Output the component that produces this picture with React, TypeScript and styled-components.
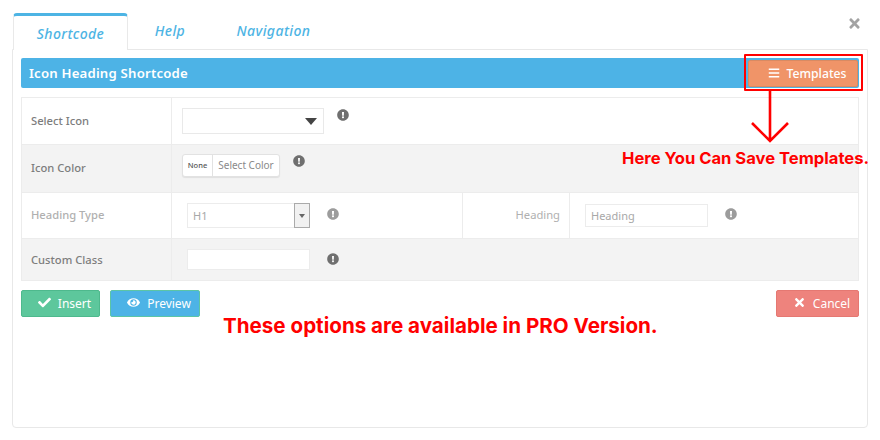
import React from 'react';
import styled, { createGlobalStyle } from 'styled-components';
import { FaBars, FaCheck, FaExclamationCircle, FaEye, FaTimes } from 'react-icons/fa';

const GlobalStyle = createGlobalStyle`
  html, body {
    margin: 0;
    padding: 0;
    background: #fff;
    font-family: 'Noto Sans', 'Open Sans', sans-serif;
  }
`;

export default function App() {
  return (
    <>
      <GlobalStyle />
      <Page>
        <TabBar>
          <ActiveTab>Shortcode</ActiveTab>
          <Tab $width={84}>Help</Tab>
          <Tab $width={123}>Navigation</Tab>
          <Close>
            <FaTimes />
          </Close>
        </TabBar>
        <Panel>
          <TitleBar>
            <Title>Icon Heading Shortcode</Title>
            <TemplatesButton>
              <FaBars />
              Templates
            </TemplatesButton>
          </TitleBar>
          <Table>
            <Row $height={47}>
              <LabelCell>Select Icon</LabelCell>
              <FieldCell>
                <Select>
                  <Caret />
                </Select>
                <Info $top={-6} $gap={13}>
                  <FaExclamationCircle />
                </Info>
              </FieldCell>
            </Row>
            <Row $height={48} $shaded>
              <LabelCell>Icon Color</LabelCell>
              <FieldCell>
                <ColorPicker>
                  <NoneSwatch>None</NoneSwatch>
                  <ColorText>Select Color</ColorText>
                </ColorPicker>
                <Info $top={-8} $gap={13}>
                  <FaExclamationCircle />
                </Info>
              </FieldCell>
            </Row>
            <Row $height={46} $muted>
              <LabelCell>Heading Type</LabelCell>
              <TypeCell>
                <TextField $width={123} $height={25}>
                  H1
                  <SpinButton />
                </TextField>
                <Info $muted $gap={17}>
                  <FaExclamationCircle />
                </Info>
              </TypeCell>
              <HeadingLabel>Heading</HeadingLabel>
              <HeadingCell>
                <TextField $width={123} $height={23}>
                  Heading
                </TextField>
                <Info $muted $gap={17}>
                  <FaExclamationCircle />
                </Info>
              </HeadingCell>
            </Row>
            <Row $height={41} $shaded>
              <LabelCell>Custom Class</LabelCell>
              <TypeCell>
                <TextField $width={123} $height={21} />
                <Info $top={-1} $gap={17}>
                  <FaExclamationCircle />
                </Info>
              </TypeCell>
            </Row>
          </Table>
          <Actions>
            <ActionButton $bg="#5dc79c" $border="#4eb98d" $width={79}>
              <FaCheck />
              Insert
            </ActionButton>
            <ActionButton $bg="#4db3e6" $border="#5cc5a5" $width={90}>
              <FaEye />
              Preview
            </ActionButton>
            <Spacer />
            <ActionButton $bg="#ee837d" $border="#e57872" $width={83}>
              <FaTimes />
              Cancel
            </ActionButton>
          </Actions>
        </Panel>

        <RedBox />
        <RedArrow width="40" height="54" viewBox="0 0 40 54">
          <path d="M20 0V50M2 32L20 50L38 32" fill="none" stroke="#f00" strokeWidth="2.6" />
        </RedArrow>
        <SaveNote>Here You Can Save Templates.</SaveNote>
        <ProNote>These options are available in PRO Version.</ProNote>
      </Page>
    </>
  );
}

const Page = styled.div`
  position: relative;
  width: 880px;
  height: 440px;
  padding: 13px 12px 0;
  box-sizing: border-box;
  overflow: hidden;
`;

const TabBar = styled.div`
  display: flex;
  height: 37px;
  padding-left: 1px;
  position: relative;
`;

const ActiveTab = styled.div`
  width: 115px;
  height: 37px;
  box-sizing: border-box;
  border: 1px solid #e9e9e9;
  border-top: 3px solid #4db4e4;
  border-bottom: 0;
  border-radius: 4px 4px 0 0;
  background: #fff;
  color: #4db4e4;
  font-size: 14px;
  font-style: italic;
  font-weight: 500;
  letter-spacing: 0.4px;
  line-height: 36px;
  text-align: center;
  position: relative;
  z-index: 1;
`;

const Tab = styled.div<{ $width: number }>`
  width: ${(p) => p.$width}px;
  color: #4db4e4;
  font-size: 14px;
  font-style: italic;
  font-weight: 500;
  letter-spacing: 0.4px;
  line-height: 36px;
  text-align: center;
`;

const Close = styled.div`
  position: absolute;
  right: 6px;
  top: 3px;
  color: #a3a3a3;
  font-size: 15px;
  line-height: 15px;
`;

const Panel = styled.div`
  width: 856px;
  height: 379px;
  box-sizing: border-box;
  margin-top: -1px;
  padding: 8px 8px 0;
  border: 1px solid #e8e8e8;
  border-radius: 0 0 4px 4px;
`;

const TitleBar = styled.div`
  display: flex;
  align-items: center;
  justify-content: space-between;
  height: 30px;
  background: #4db3e6;
  border-radius: 2px;
  padding: 0 1px 0 8px;
`;

const Title = styled.div`
  color: #fff;
  font-size: 13.2px;
  font-weight: 600;
  letter-spacing: 0.2px;
`;

const TemplatesButton = styled.div`
  display: flex;
  align-items: center;
  justify-content: center;
  gap: 7px;
  width: 110px;
  height: 27px;
  box-sizing: border-box;
  padding-left: 8px;
  background: #f09468;
  border: 1px solid #d98a62;
  border-radius: 2px;
  color: #fff;
  font-size: 12.2px;
  font-weight: 500;

  svg {
    font-size: 12px;
  }
`;

const Table = styled.div`
  margin-top: 9px;
  border: 1px solid #ececec;
`;

const Row = styled.div<{ $height: number; $shaded?: boolean; $muted?: boolean }>`
  display: flex;
  height: ${(p) => p.$height}px;
  box-sizing: border-box;
  background: ${(p) => (p.$shaded ? '#f3f3f3' : '#fff')};
  color: ${(p) => (p.$muted ? '#b0b0b0' : '#7d7d7d')};
  border-bottom: 1px solid #ececec;

  &:last-child {
    border-bottom: 0;
  }
`;

const LabelCell = styled.div`
  display: flex;
  align-items: center;
  width: 150px;
  box-sizing: border-box;
  padding: 0 0 2px 9px;
  margin-right: -1px;
  border-right: 1px solid #ececec;
  font-size: 11.2px;
  font-weight: 500;

  ${Row}:last-child & {
    padding-bottom: 0;
  }
`;

const FieldCell = styled.div`
  display: flex;
  align-items: center;
  flex: 1;
  padding-left: 11px;
`;

const TypeCell = styled.div`
  display: flex;
  align-items: center;
  width: 291px;
  box-sizing: border-box;
  padding-left: 16px;
`;

const HeadingLabel = styled.div`
  display: flex;
  align-items: center;
  justify-content: flex-end;
  width: 108px;
  box-sizing: border-box;
  padding: 0 9px 2px 0;
  border-left: 1px solid #ececec;
  border-right: 1px solid #ececec;
  font-size: 11.2px;
`;

const HeadingCell = styled.div`
  display: flex;
  align-items: center;
  flex: 1;
  padding-left: 15px;
`;

const Select = styled.div`
  display: flex;
  align-items: center;
  justify-content: flex-end;
  width: 142px;
  height: 26px;
  box-sizing: border-box;
  padding-right: 6px;
  border: 1px solid #e9e9e9;
  background: #fff;
`;

const Caret = styled.span`
  width: 0;
  height: 0;
  border-left: 6px solid transparent;
  border-right: 6px solid transparent;
  border-top: 7px solid #444;
`;

const Info = styled.span<{ $top?: number; $muted?: boolean; $gap: number }>`
  display: inline-flex;
  margin-left: ${(p) => p.$gap}px;
  color: ${(p) => (p.$muted ? '#9c9c9c' : '#6f6f6f')};
  font-size: 12px;
  transform: translateY(${(p) => p.$top ?? -2}px);
`;

const ColorPicker = styled.div`
  display: flex;
  height: 23px;
  box-sizing: border-box;
  border: 1px solid #e2e2e2;
  border-radius: 3px;
  background: #fff;
  box-shadow: 0 1px 1px rgba(0, 0, 0, 0.08);
  transform: translateY(-3px);
`;

const NoneSwatch = styled.div`
  width: 29px;
  border-right: 1px solid #e2e2e2;
  color: #555;
  font-size: 7.5px;
  font-weight: 500;
  line-height: 21px;
  text-align: center;
`;

const ColorText = styled.div`
  width: 66px;
  color: #8a8a8a;
  font-size: 10px;
  line-height: 21px;
  text-align: center;
`;

const TextField = styled.div<{ $width: number; $height: number }>`
  position: relative;
  width: ${(p) => p.$width}px;
  height: ${(p) => p.$height}px;
  box-sizing: border-box;
  padding-left: 5px;
  border: 1px solid #ececec;
  background: #fff;
  color: #a8a8a8;
  font-size: 11px;
  line-height: ${(p) => p.$height - 2}px;
`;

const SpinButton = styled.span`
  position: absolute;
  right: -1px;
  top: -1px;
  width: 16px;
  height: 25px;
  box-sizing: border-box;
  border: 1px solid #aaa;
  background: #f1f1f1;

  &::after {
    content: '';
    position: absolute;
    left: 4px;
    top: 10px;
    border-left: 3px solid transparent;
    border-right: 3px solid transparent;
    border-top: 4px solid #666;
  }
`;

const Actions = styled.div`
  display: flex;
  gap: 10px;
  margin-top: 9px;
`;

const Spacer = styled.div`
  flex: 1;
`;

const ActionButton = styled.div<{ $bg: string; $border: string; $width: number }>`
  display: flex;
  align-items: center;
  justify-content: center;
  gap: 7px;
  width: ${(p) => p.$width}px;
  height: 27px;
  box-sizing: border-box;
  padding-left: 8px;
  background: ${(p) => p.$bg};
  border: 1px solid ${(p) => p.$border};
  border-radius: 2px;
  color: #fff;
  font-size: 12px;

  svg {
    font-size: 13px;
    transform: translateY(-1px);
  }
`;

const RedBox = styled.div`
  position: absolute;
  left: 744px;
  top: 54px;
  width: 119px;
  height: 37px;
  box-sizing: border-box;
  border: 2px solid #f00;
  border-radius: 1px;
`;

const RedArrow = styled.svg`
  position: absolute;
  left: 750px;
  top: 91px;
`;

const SaveNote = styled.div`
  position: absolute;
  left: 622px;
  top: 147px;
  color: #f00;
  font-family: 'Inter', sans-serif;
  font-size: 16.6px;
  font-weight: 700;
  line-height: 22px;
  white-space: nowrap;
`;

const ProNote = styled.div`
  position: absolute;
  left: 223px;
  top: 313px;
  color: #f00;
  font-family: 'Inter', sans-serif;
  font-size: 20.6px;
  font-weight: 700;
  line-height: 26px;
  white-space: nowrap;
`;
